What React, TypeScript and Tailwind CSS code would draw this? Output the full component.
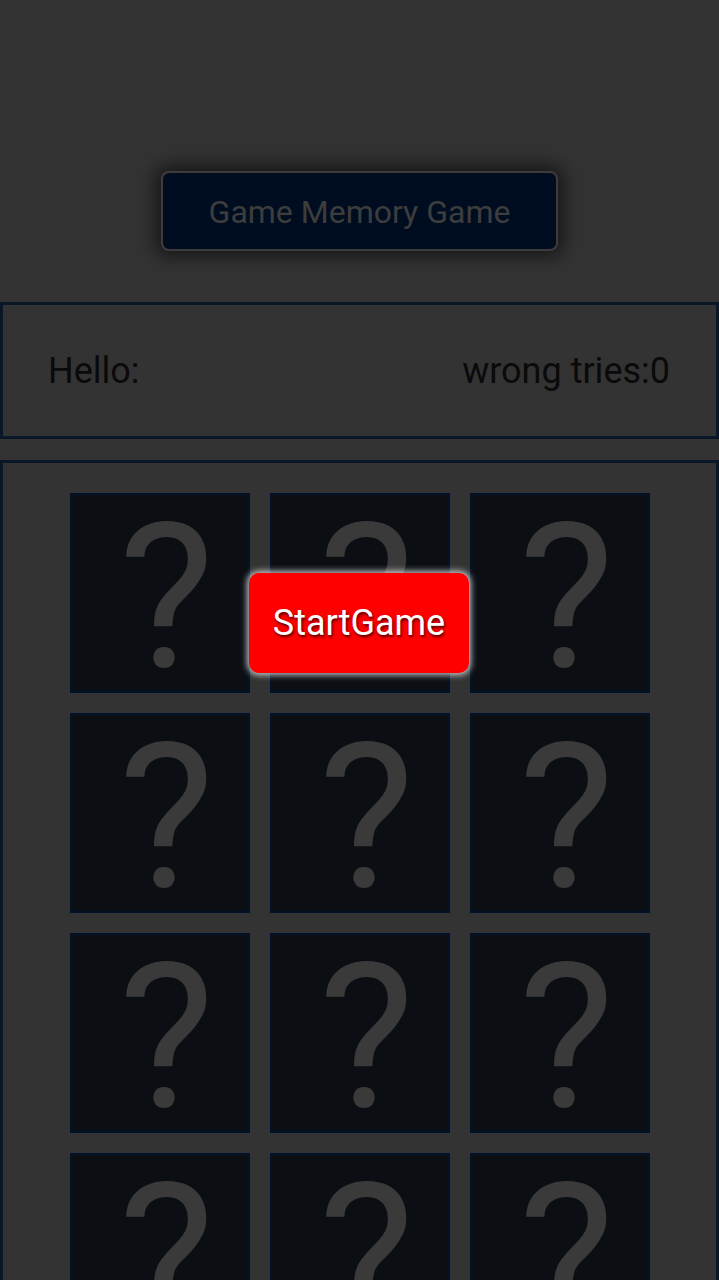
import React from 'react';

const App: React.FC = () => {
  const cards = Array.from({ length: 12 });

  return (
    <div className="relative min-h-screen bg-[#333333] font-['Roboto','Liberation_Sans',sans-serif] overflow-hidden">
      {/* Title */}
      <div className="h-[302px] flex justify-center pt-[171px]">
        <div className="w-[397px] h-[80px] rounded-lg bg-[#000d20] border-2 border-[#3c3c3c] shadow-[0_0_18px_6px_rgba(0,0,0,0.55)] flex items-center justify-center">
          <span className="text-[32px] text-[#3d3d3d] mt-[2px]">Game Memory Game</span>
        </div>
      </div>

      {/* Status bar */}
      <div className="h-[137px] border-[3px] border-[#0b1628] flex items-center justify-between pl-[45px] pr-[46px]">
        <span className="text-[36px] text-[#0a0a0a]">Hello:</span>
        <span className="text-[36px] text-[#0a0a0a]">wrong tries:0</span>
      </div>

      {/* Board */}
      <div className="mt-[21px] border-[3px] border-b-0 border-[#0b1628] pt-[30px] pb-10">
        <div className="grid grid-cols-[repeat(3,180px)] gap-x-5 gap-y-5 justify-center">
          {cards.map((_, i) => (
            <div
              key={i}
              className="h-[200px] bg-[#0b0e13] border-2 border-[#01132b] flex items-center justify-center pl-[14px] overflow-hidden"
            >
              <span className="text-[202px] leading-none text-[#3a3a3a] mt-[10px]">?</span>
            </div>
          ))}
        </div>
      </div>

      {/* Start overlay */}
      <button className="absolute left-[249px] top-[573px] w-[220px] h-[100px] rounded-[10px] bg-[#ff0000] shadow-[0_0_6px_2px_rgba(255,255,255,0.75)] flex items-center justify-center">
        <span className="text-[36px] text-white [text-shadow:1px_2px_3px_rgba(0,0,0,0.7)]">StartGame</span>
      </button>
    </div>
  );
};

export default App;
